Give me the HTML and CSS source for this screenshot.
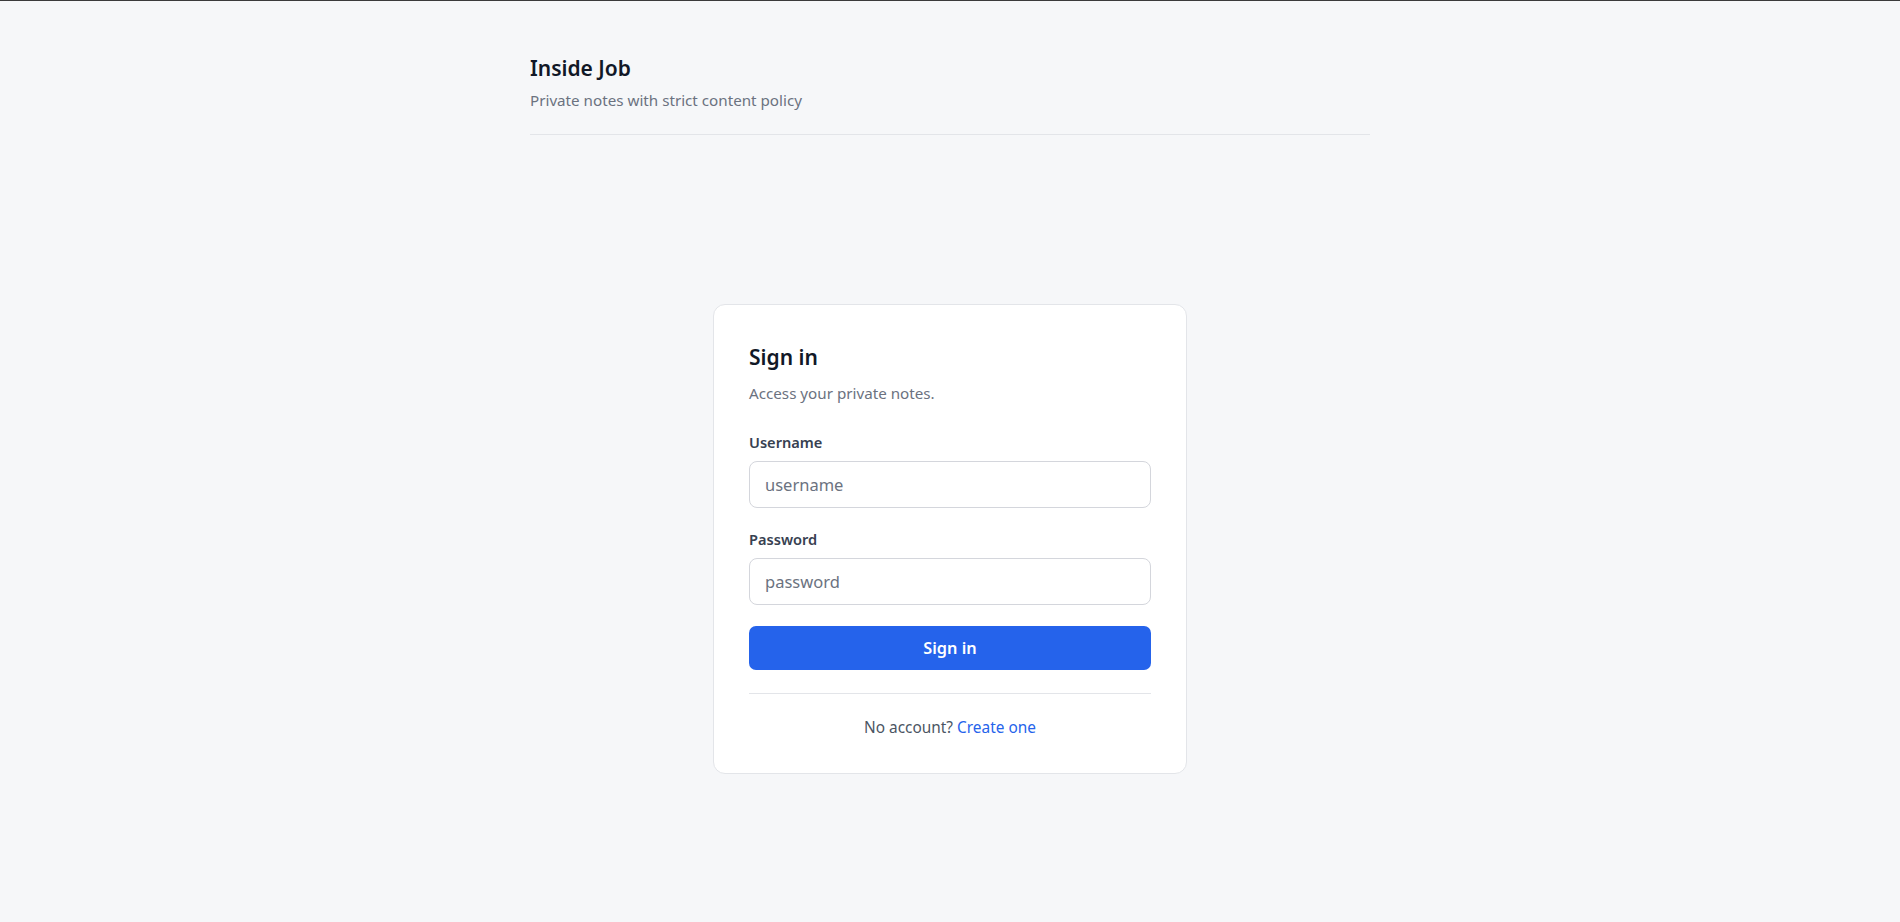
FILE: index.html
```html
<!DOCTYPE html>
<html lang="en">
<head>
<meta charset="utf-8">
<title>Inside Job</title>
<link rel="stylesheet" href="styles.css">
</head>
<body>
<div class="page">
  <header class="site-header">
    <h1 class="site-title">Inside Job</h1>
    <p class="site-tagline">Private notes with strict content policy</p>
  </header>
  <main class="main">
    <section class="card">
      <h2 class="card-title">Sign in</h2>
      <p class="card-subtitle">Access your private notes.</p>
      <form class="form">
        <div class="field">
          <label class="label" for="username">Username</label>
          <input class="input" id="username" type="text" placeholder="username">
        </div>
        <div class="field field-second">
          <label class="label" for="password">Password</label>
          <input class="input" id="password" type="password" placeholder="password">
        </div>
        <button class="btn" type="button">Sign in</button>
      </form>
      <div class="card-footer">
        <span>No account?</span> <a class="link" href="#">Create one</a>
      </div>
    </section>
  </main>
</div>
</body>
</html>
```
FILE: styles.css
```css
* { box-sizing: border-box; }
html, body { margin: 0; padding: 0; }
body {
  background: #f6f7f9;
  border-top: 1px solid #3b3b3b;
  font-family: "Segoe UI", "Noto Sans", "Open Sans", sans-serif;
  color: #111827;
  min-height: 922px;
}
.page {
  max-width: 840px;
  margin: 0 auto;
}
.site-header {
  padding-top: 53px;
  padding-bottom: 24px;
  border-bottom: 1px solid #e3e5e9;
}
.site-title {
  margin: 0;
  font-size: 21px;
  line-height: 28px;
  font-weight: 600;
  color: #111827;
}
.site-tagline {
  margin: 8px 0 0;
  font-size: 15.2px;
  line-height: 20px;
  color: #6b7280;
}
.main {
  display: flex;
  justify-content: center;
  padding-top: 169px;
}
.card {
  width: 474px;
  background: #ffffff;
  border: 1px solid #e3e5e9;
  border-radius: 12px;
  padding: 35px;
}
.card-title {
  margin: 0;
  font-size: 21px;
  line-height: 34px;
  font-weight: 600;
  color: #111827;
}
.card-subtitle {
  margin: 9px 0 0;
  font-size: 15.2px;
  line-height: 20px;
  color: #6b7280;
}
.form {
  display: flex;
  flex-direction: column;
  margin-top: 29px;
}
.field {
  display: flex;
  flex-direction: column;
}
.field-second { margin-top: 21px; }
.label {
  font-size: 14.6px;
  line-height: 20px;
  font-weight: 600;
  color: #374151;
  margin-bottom: 9px;
}
.input {
  height: 47px;
  border: 1px solid #d4d6dc;
  border-radius: 8px;
  padding: 0 15px;
  font-family: inherit;
  font-size: 16.5px;
  color: #111827;
  background: #ffffff;
  outline: none;
}
.input::placeholder { color: #6b7280; }
.btn {
  margin-top: 21px;
  height: 44px;
  border: 0;
  border-radius: 7px;
  background: #2563eb;
  color: #ffffff;
  font-family: inherit;
  font-size: 16.3px;
  font-weight: 600;
  cursor: pointer;
}
.card-footer {
  margin-top: 23px;
  border-top: 1px solid #e3e5e9;
  padding-top: 24px;
  text-align: center;
  font-size: 15.4px;
  line-height: 20px;
  color: #4b5563;
}
.link {
  color: #2563eb;
  text-decoration: none;
}
```
